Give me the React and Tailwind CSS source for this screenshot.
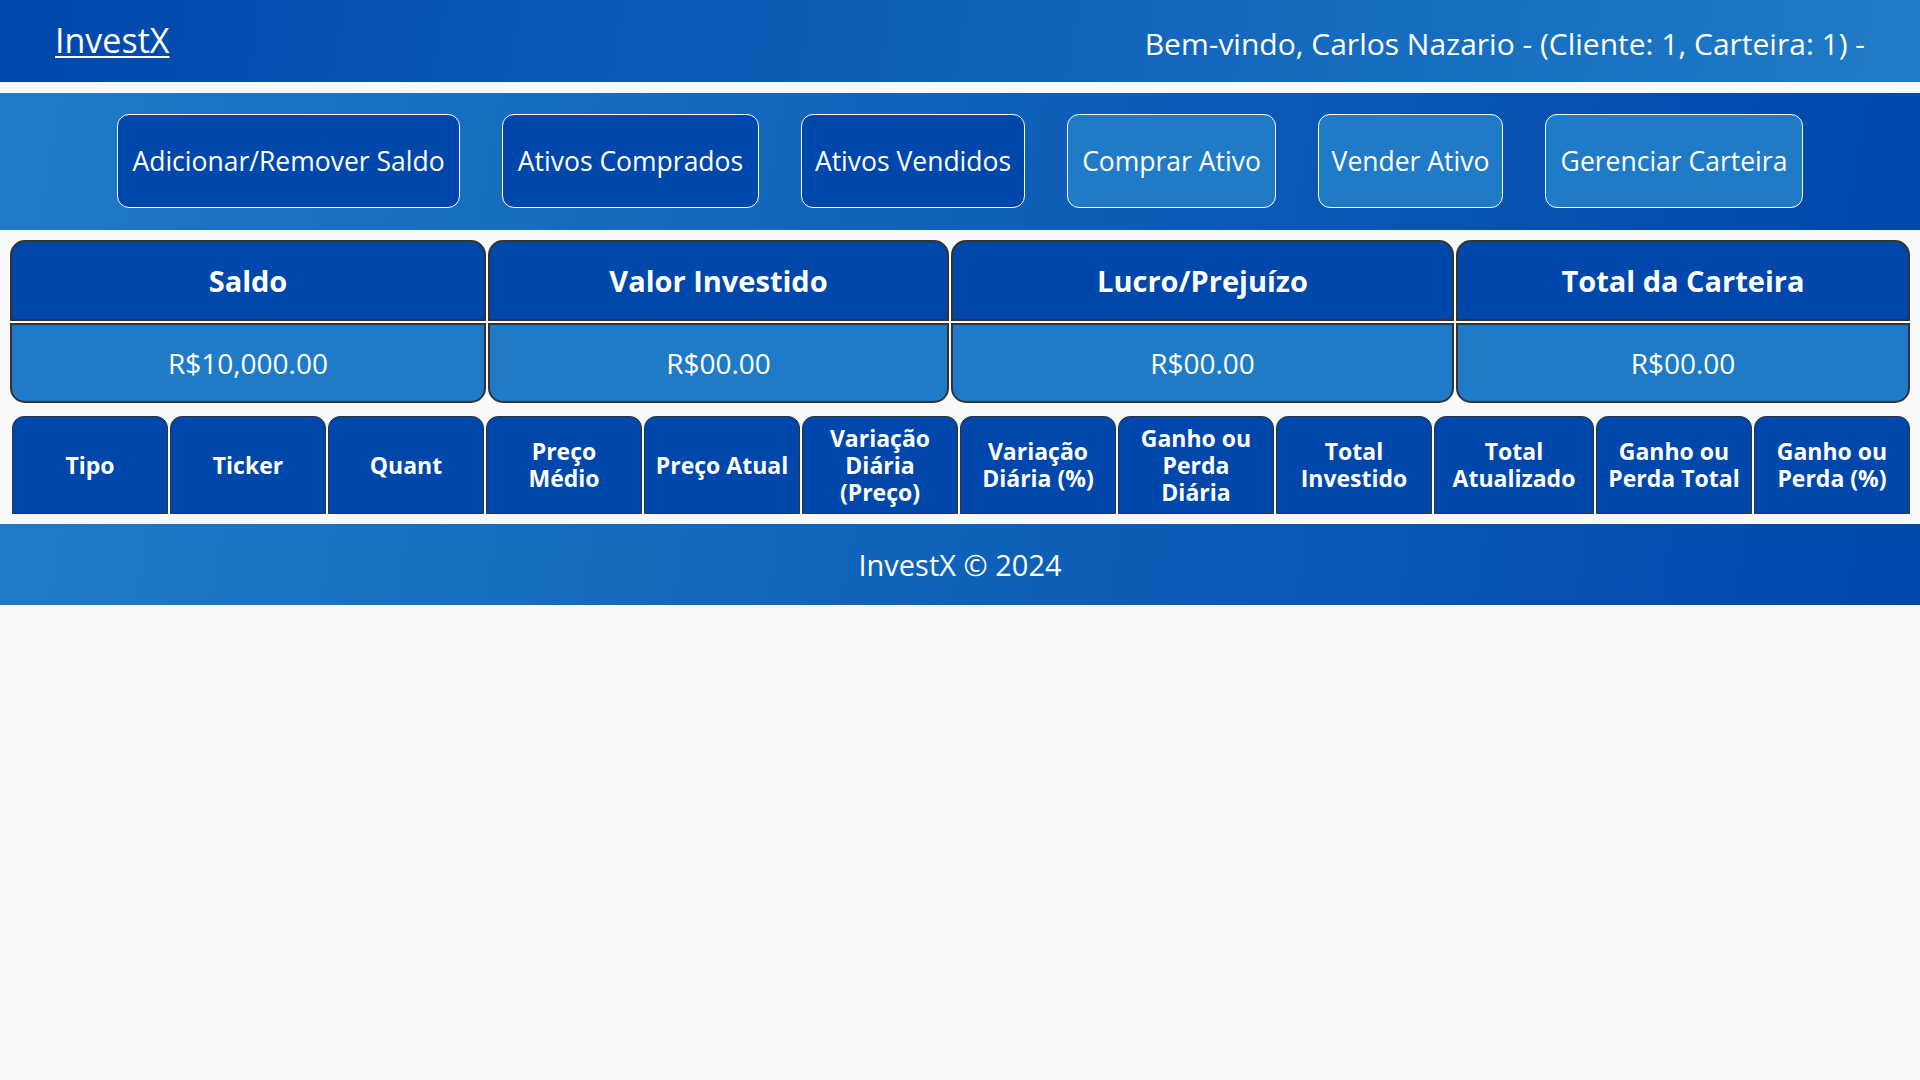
import React from 'react';

const navButtons = [
  { label: 'Adicionar/Remover Saldo', w: 'w-[343px]', dark: true },
  { label: 'Ativos Comprados', w: 'w-[257px]', dark: true },
  { label: 'Ativos Vendidos', w: 'w-[224px]', dark: true },
  { label: 'Comprar Ativo', w: 'w-[209px]', dark: false },
  { label: 'Vender Ativo', w: 'w-[185px]', dark: false },
  { label: 'Gerenciar Carteira', w: 'w-[258px]', dark: false },
];

const summary = [
  { title: 'Saldo', value: 'R$10,000.00' },
  { title: 'Valor Investido', value: 'R$00.00' },
  { title: 'Lucro/Prejuízo', value: 'R$00.00' },
  { title: 'Total da Carteira', value: 'R$00.00' },
];

const columns = [
  'Tipo',
  'Ticker',
  'Quant',
  'Preço Médio',
  'Preço Atual',
  'Variação Diária (Preço)',
  'Variação Diária (%)',
  'Ganho ou Perda Diária',
  'Total Investido',
  'Total Atualizado',
  'Ganho ou Perda Total',
  'Ganho ou Perda (%)',
];

const App = () => {
  return (
    <div className="min-h-screen bg-[#f8f9fa] font-['Open_Sans',sans-serif] text-white">
      {/* Header */}
      <header className="h-[82px] flex items-center justify-between pl-[55px] pr-[55px] bg-[linear-gradient(100deg,#0047ab,#1f7bc7)]">
        <a href="#" className="text-[34px] leading-none underline underline-offset-[3px] decoration-[2px] -mt-[2px]">InvestX</a>
        <span className="text-[30px] leading-none mt-[5px]">Bem-vindo, Carlos Nazario - (Cliente: 1, Carteira: 1) -</span>
      </header>

      {/* Nav */}
      <nav className="mt-[11px] h-[137px] flex items-center justify-center gap-[42px] bg-[linear-gradient(100deg,#1f7bc7,#0047ab)]">
        {navButtons.map((b) => (
          <button
            key={b.label}
            className={`${b.w} h-[94px] -mt-[1px] pt-[2px] rounded-[12px] border border-white text-[26.5px] text-white whitespace-nowrap ${b.dark ? 'bg-[#0047ab]' : 'bg-[#1f7bc7]'}`}
          >
            {b.label}
          </button>
        ))}
      </nav>

      {/* Resumo */}
      <div className="mt-[10px] mx-[10px] grid grid-cols-[476px_461px_503px_454px] gap-x-[2px] gap-y-[2px]">
        {summary.map((s) => (
          <div key={s.title} className="h-[81px] flex items-center justify-center bg-[#0047ab] border-2 border-[#333] rounded-t-[15px] text-[29px] font-bold">
            {s.title}
          </div>
        ))}
        {summary.map((s) => (
          <div key={s.title + '-v'} className="h-[80px] flex items-center justify-center bg-[#1f7bc7] border-2 border-[#333] rounded-b-[15px] text-[28px]">
            {s.value}
          </div>
        ))}
      </div>

      {/* Tabela de ativos */}
      <div className="mt-[13px] ml-[12px] grid grid-cols-[repeat(9,156px)_160px_repeat(2,156px)] gap-x-[2px]">
        {columns.map((c) => (
          <div key={c} className="h-[98px] flex items-center justify-center text-center px-[8px] bg-[#0047ab] border border-[#333] rounded-t-[12px] text-[23px] leading-[27px] font-bold">
            {c}
          </div>
        ))}
      </div>

      {/* Footer */}
      <footer className="mt-[10px] h-[81px] flex items-center justify-center bg-[linear-gradient(100deg,#1f7bc7,#0047ab)] text-[29px]">
        InvestX © 2024
      </footer>
    </div>
  );
};

export default App;
